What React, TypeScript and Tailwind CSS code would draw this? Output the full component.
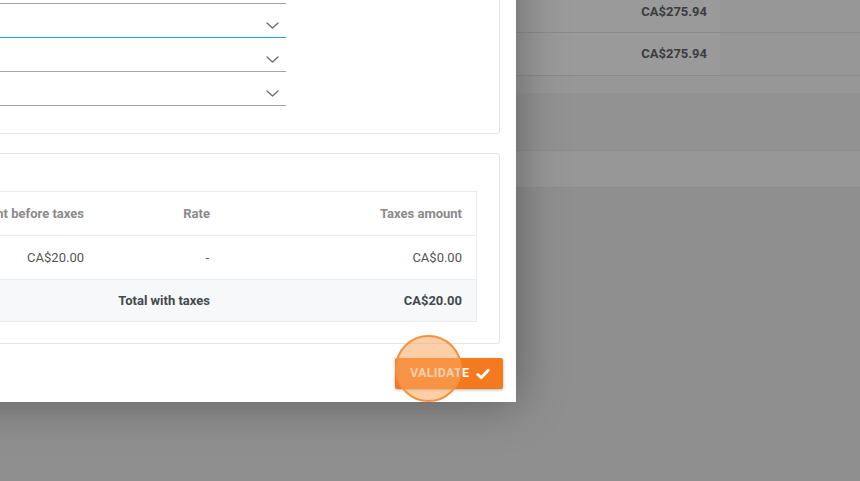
import React from 'react';

const Chevron = () => (
  <svg width="13" height="7" viewBox="0 0 13 7" fill="none">
    <path d="M1 1 L6.5 6 L12 1" stroke="#6b6b6b" strokeWidth="1.3" strokeLinecap="round" strokeLinejoin="round" />
  </svg>
);

const Check = () => (
  <svg width="14" height="12" viewBox="0 0 14 12" fill="none">
    <path d="M1.8 6.4 L5.2 9.8 L12.2 2.2" stroke="#ffffff" strokeWidth="2.8" strokeLinecap="round" strokeLinejoin="round" />
  </svg>
);

const Select = ({ focused, chevron }: { focused?: boolean; chevron?: boolean }) => (
  <div className="flex h-[34px] flex-col">
    <div className="flex flex-1 items-end justify-end pb-[8px] pr-[7px]">{chevron && <Chevron />}</div>
    <div className={focused ? 'h-[1px] bg-[#1eb0c8]' : 'h-[1px] bg-[#a3a3a3]'} />
  </div>
);

export default function App() {
  return (
    <div className="relative h-[481px] w-[860px] overflow-hidden bg-[#8f8f8f] font-['Roboto',sans-serif]">
      {/* dimmed page behind the modal */}
      <div className="flex flex-col">
        <div className="flex h-[33px] border-b border-[#8b8b8b] bg-[#979797]">
          <div className="flex w-[720px] items-start justify-end bg-[#9a9a9a] pr-[13px] pt-[4px] text-[13px] font-bold leading-[15px] text-[#3a3c40]">CA$275.94</div>
        </div>
        <div className="flex h-[43px] border-b border-[#8b8b8b] bg-[#979797]">
          <div className="flex w-[720px] items-center justify-end bg-[#9a9a9a] pr-[13px] text-[13px] font-bold text-[#3a3c40]">CA$275.94</div>
        </div>
        <div className="h-[17px] bg-[#979797]" />
        <div className="h-[58px] border-b border-[#8b8b8b] bg-[#929292]" />
        <div className="h-[37px] border-b border-[#8c8c8c] bg-[#979797]" />
      </div>

      {/* modal */}
      <div className="absolute left-[-284px] top-[-67px] flex w-[800px] flex-col bg-white px-[16px] pb-[13px] pt-[16px] shadow-[0_0_45px_rgba(0,0,0,0.35)]">
        <div className="rounded-[3px] border border-[#e4e4e4] px-[20px] pb-[27px] pt-[20px]">
          <div className="flex w-[533px] flex-col">
            <Select />
            <Select focused chevron />
            <Select chevron />
            <Select chevron />
          </div>
        </div>

        <div className="mt-[19px] rounded-[3px] border border-[#e4e4e4] pb-[21px] pl-[20px] pr-[22px] pt-[37px]">
          <div className="flex flex-col border-t border-r border-[#ebebeb] text-[13px]">
            <div className="flex h-[44px] items-center border-b border-[#ebebeb] font-bold text-[#8a8a8a]">
              <div className="flex-1 pr-[14px] text-right">Amount before taxes</div>
              <div className="w-[126px] pr-[14px] text-right">Rate</div>
              <div className="w-[252px] pr-[14px] text-right">Taxes amount</div>
            </div>
            <div className="flex h-[44px] items-center border-b border-[#ebebeb] text-[#555555]">
              <div className="flex-1 pr-[14px] text-right">CA$20.00</div>
              <div className="w-[126px] pr-[15px] text-right">-</div>
              <div className="w-[252px] pr-[14px] text-right">CA$0.00</div>
            </div>
            <div className="flex h-[42px] items-center border-b border-[#ebebeb] bg-[#f7f8fa] font-bold text-[#45484d]">
              <div className="flex-1 pr-[14px] text-right" />
              <div className="w-[126px] pr-[14px] text-right">Total with taxes</div>
              <div className="w-[252px] pr-[14px] text-right">CA$20.00</div>
            </div>
          </div>
        </div>

        <div className="mt-[14px] flex justify-end -mr-[3px]">
          <button className="flex h-[31px] w-[108px] items-center gap-[7px] rounded-[2px] bg-[#f47a1f] pl-[15px] text-[12.5px] font-bold tracking-[0.3px] text-white shadow-[0_1px_3px_rgba(0,0,0,0.3)]">
            VALIDATE
            <Check />
          </button>
        </div>
      </div>

      {/* click marker */}
      <div className="absolute left-[395px] top-[335px] h-[67px] w-[67px] rounded-full border-2 border-[#f4913d] bg-[#fba863]/55" />
    </div>
  );
}
